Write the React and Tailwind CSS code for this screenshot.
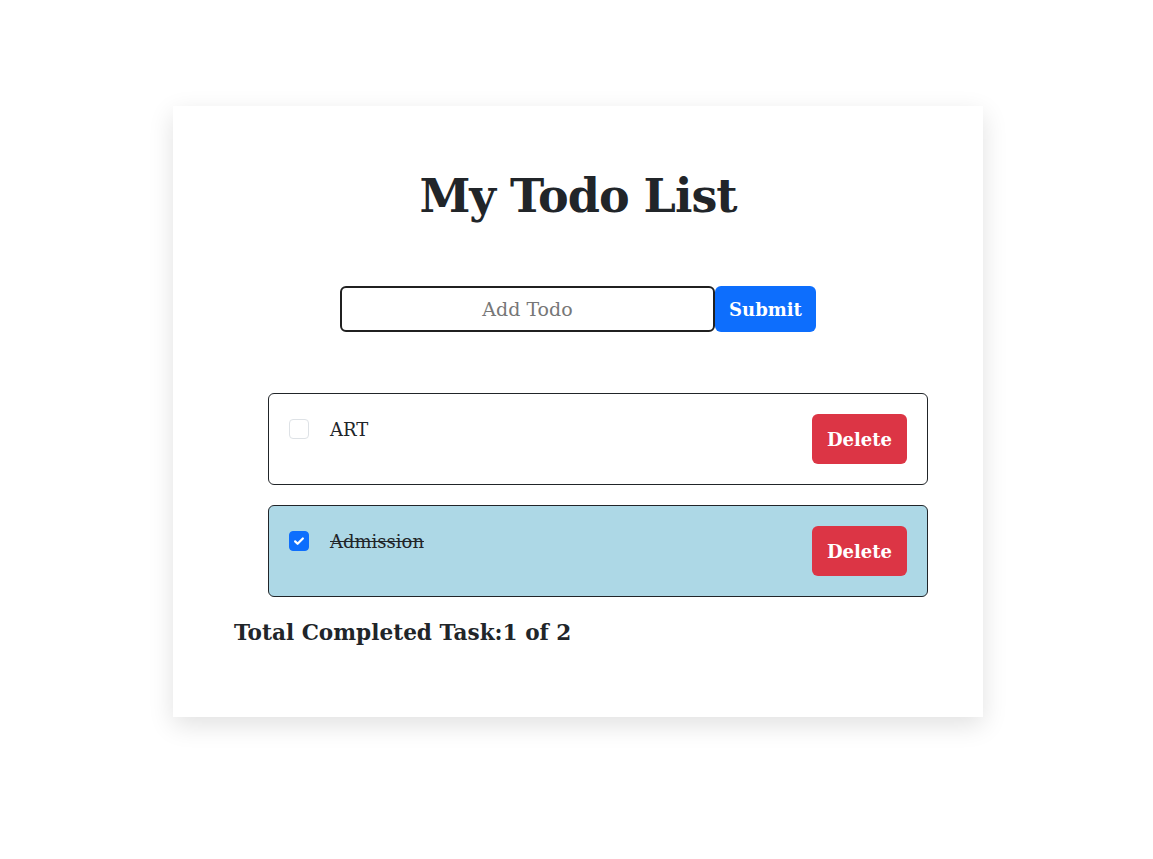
import { useState } from 'react';

const App = () => {
  const [todos, setTodos] = useState([
    { id: 1, text: 'ART', done: false },
    { id: 2, text: 'Admission', done: true },
  ]);
  const completed = todos.filter((t) => t.done).length;

  const toggle = (id) =>
    setTodos(todos.map((t) => (t.id === id ? { ...t, done: !t.done } : t)));
  const remove = (id) => setTodos(todos.filter((t) => t.id !== id));

  return (
    <div className="min-h-[859px] bg-white pt-[106px] text-[#212529]" style={{ fontFamily: '"DejaVu Serif", serif' }}>
      <div className="ml-[173px] w-[810px] bg-white shadow-[0_8px_24px_rgba(0,0,0,0.12)] pt-[60px] pb-[70px]">
        <h1 className="text-center text-[46px] font-bold leading-[60px] tracking-[-1px]">My Todo List</h1>

        <form className="mt-[60px] flex justify-center" onSubmit={(e) => e.preventDefault()}>
          <input
            className="h-[46px] w-[375px] rounded-[6px] border-2 border-[#202020] text-center text-[19px] placeholder:text-[#777] outline-none"
            placeholder="Add Todo"
          />
          <button className="h-[46px] w-[101px] rounded-[6px] bg-[#0d6efd] text-[18px] font-bold text-white">
            Submit
          </button>
        </form>

        <ul className="mt-[61px] ml-[95px] flex w-[660px] flex-col gap-[20px]">
          {todos.map((t) => (
            <li
              key={t.id}
              className={`flex h-[92px] items-start justify-between rounded-[6px] border border-[#212529] px-[20px] pt-[20px] ${
                t.done ? 'bg-[#add8e6]' : 'bg-white'
              }`}
            >
              <div className="flex gap-[21px] pt-[5px]">
                <button
                  onClick={() => toggle(t.id)}
                  className={`flex h-[20px] w-[20px] items-center justify-center rounded-[4px] border ${
                    t.done ? 'border-[#0d6efd] bg-[#0d6efd]' : 'border-[#dee2e6] bg-white'
                  }`}
                >
                  {t.done && (
                    <svg width="14" height="14" viewBox="0 0 20 20">
                      <path d="M4.5 10.5l3.5 3.5L15.5 6.5" fill="none" stroke="white" strokeWidth="3.2" strokeLinecap="round" strokeLinejoin="round" />
                    </svg>
                  )}
                </button>
                <span className={`text-[18px] font-light leading-[22px] ${t.done ? 'line-through' : ''}`}>{t.text}</span>
              </div>
              <button
                onClick={() => remove(t.id)}
                className="h-[50px] w-[95px] rounded-[6px] bg-[#dc3545] text-[18px] font-bold text-white"
              >
                Delete
              </button>
            </li>
          ))}
        </ul>

        <h3 className="ml-[61px] mt-[22px] text-[21.6px] font-bold leading-[28px]">
          Total Completed Task:{completed} of {todos.length}
        </h3>
      </div>
    </div>
  );
};

export default App;
